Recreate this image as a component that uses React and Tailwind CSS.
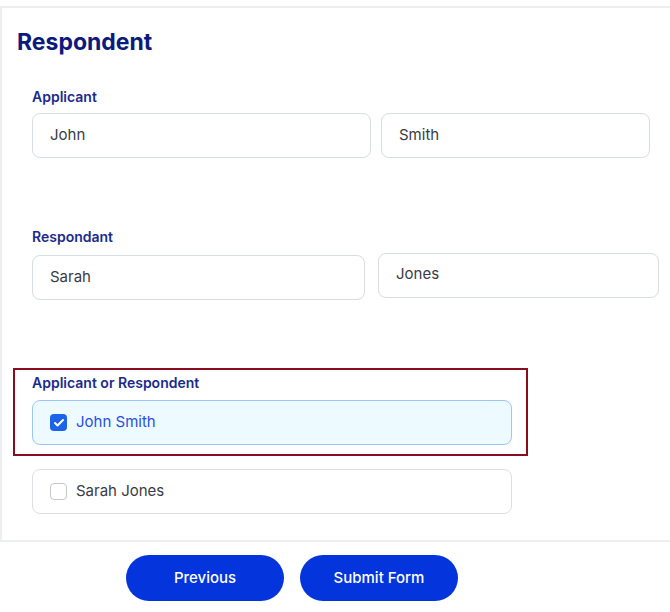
import { Check } from "lucide-react";

function TextBox({ value, className }) {
  return (
    <div
      className={`h-[45px] flex items-center px-[17px] rounded-lg border border-[#d8dce3] bg-white text-[15px] text-[#3b3b44] ${className}`}
    >
      {value}
    </div>
  );
}

function Choice({ label, checked }) {
  return (
    <div
      className={`w-[480px] h-[45px] flex items-center gap-[9px] px-[17px] rounded-lg border ${
        checked
          ? "bg-[#edfaff] border-[#9cc6f9] text-[#2a4fe0]"
          : "bg-white border-[#dcdfe5] text-[#3b3b44]"
      }`}
    >
      {checked ? (
        <span className="w-[17px] h-[17px] rounded-[4px] bg-[#1c63ea] flex items-center justify-center">
          <Check size={12} strokeWidth={4} className="text-white" />
        </span>
      ) : (
        <span className="w-[17px] h-[17px] rounded-[4px] border border-[#c4c7cd] bg-white" />
      )}
      <span className="text-[15px]">{label}</span>
    </div>
  );
}

export default function App() {
  return (
    <div
      className="w-[670px] h-[612px] bg-white overflow-hidden"
      style={{ fontFamily: "Inter, 'Open Sans', sans-serif" }}
    >
      <div className="h-[6px]" />
      <div className="border-t-2 border-l-2 border-[#eceef1] h-[534px] pl-[15px]">
        <h1 className="pt-[19px] text-[23px] leading-[30px] font-bold text-[#0b1a7c]">
          Respondent
        </h1>

        <div className="pl-[15px] pt-[31px]">
          <div className="text-[14px] leading-[18px] font-semibold text-[#1a2b8c]">
            Applicant
          </div>
          <div className="flex gap-[10px] mt-[7px]">
            <TextBox value="John" className="w-[339px]" />
            <TextBox value="Smith" className="w-[269px]" />
          </div>

          <div className="mt-[70px] text-[14px] leading-[18px] font-semibold text-[#1a2b8c]">
            Respondant
          </div>
          <div className="flex gap-[13px] mt-[7px] items-start">
            <TextBox value="Sarah" className="w-[333px] mt-[2px]" />
            <TextBox value="Jones" className="w-[281px] pb-[3px]" />
          </div>
        </div>

        <div className="mt-[68px] -ml-[4px] w-[515px] h-[88px] border-2 border-[#8a0d1f] pl-[17px] pt-[4px]">
          <div className="text-[14px] leading-[18px] font-semibold text-[#1a2b8c]">
            Applicant or Respondent
          </div>
          <div className="mt-[8px]">
            <Choice label="John Smith" checked />
          </div>
        </div>

        <div className="pl-[15px] mt-[13px]">
          <Choice label="Sarah Jones" />
        </div>
      </div>
      <div className="border-t-2 border-[#eceef1] flex gap-[16px] pl-[126px] pt-[13px]">
        <button className="w-[158px] h-[46px] rounded-full bg-[#0434dc] text-white text-[15px] font-medium">
          Previous
        </button>
        <button className="w-[158px] h-[46px] rounded-full bg-[#0434dc] text-white text-[15px] font-medium">
          Submit Form
        </button>
      </div>
    </div>
  );
}
